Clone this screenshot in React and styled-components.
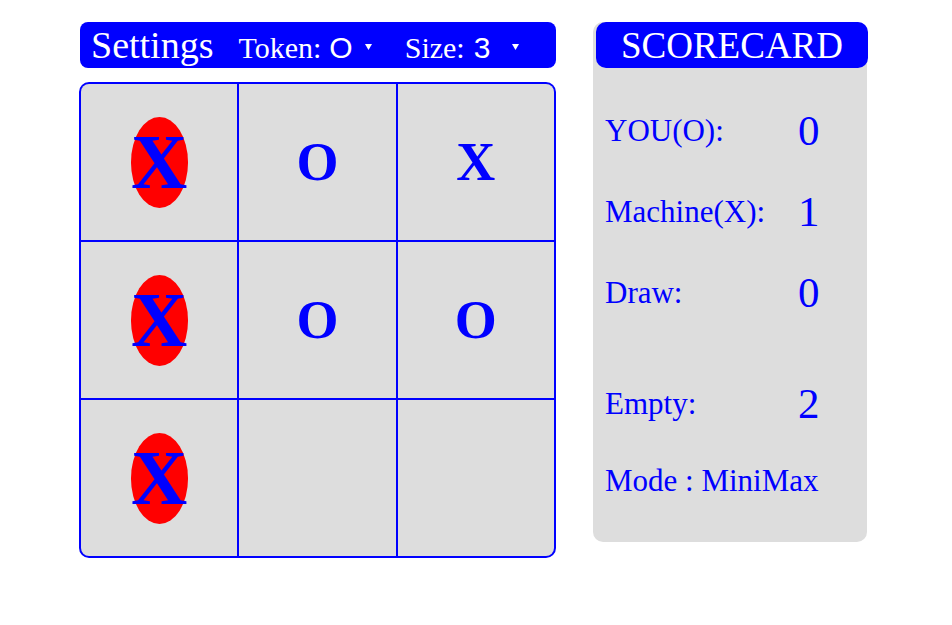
import React from 'react';
import styled, { createGlobalStyle } from 'styled-components';

const GlobalStyle = createGlobalStyle`
    body {
        margin: 0;
        background: #fff;
        font-family: "Liberation Serif", "Times New Roman", serif;
    }
`;

const board = [
    ['X', 'O', 'X'],
    ['X', 'O', 'O'],
    ['X', '', ''],
];
const winning = [[0, 0], [1, 0], [2, 0]];

const scores = [
    { label: 'YOU(O):', value: 0 },
    { label: 'Machine(X):', value: 1 },
    { label: 'Draw:', value: 0 },
];

const Page = styled.div`
    display: flex;
    align-items: flex-start;
    gap: 37px;
    padding: 22px 0 0 79px;
`;

const GameColumn = styled.div`
    width: 477px;
    display: flex;
    flex-direction: column;
`;

const SettingsBar = styled.div`
    margin-left: 1px;
    width: 476px;
    height: 46px;
    box-sizing: border-box;
    padding: 1px 0 0 11px;
    background: #0000ff;
    border-radius: 8px;
    color: #fff;
    display: flex;
    align-items: baseline;
`;

const SettingsTitle = styled.span`
    font-size: 38px;
`;

const SettingLabel = styled.span`
    font-size: 30px;
    margin-left: ${(p) => p.$gap}px;
`;

const SelectValue = styled.span`
    font-family: "Liberation Sans", Arial, sans-serif;
    font-size: 30px;
    margin-left: ${(p) => p.$gap}px;
`;

const Caret = styled.svg`
    align-self: center;
    margin-left: ${(p) => p.$gap}px;
    margin-top: 2px;
`;

const Board = styled.div`
    margin-top: 14px;
    width: 477px;
    height: 476px;
    box-sizing: border-box;
    border: 2px solid #0000ff;
    border-radius: 10px;
    overflow: hidden;
    background: #0000ff;
    display: grid;
    grid-template-columns: repeat(3, 1fr);
    grid-template-rows: repeat(3, 1fr);
    gap: 2px;
`;

const Cell = styled.div`
    background: #dddddd;
    display: flex;
    align-items: center;
    justify-content: center;
    color: #0000ff;
    font-weight: bold;
    font-size: 54px;
`;

const WinMark = styled.span`
    display: inline-flex;
    align-items: center;
    justify-content: center;
    width: 57px;
    height: 91px;
    border-radius: 50%;
    background: #ff0000;
    font-size: 78px;
    line-height: 1;
`;

const ScoreCard = styled.div`
    width: 274px;
    height: 520px;
    box-sizing: border-box;
    background: #dddddd;
    border-radius: 10px;
    display: flex;
    flex-direction: column;
`;

const ScoreHeader = styled.div`
    margin: 0 -1px 0 3px;
    height: 46px;
    background: #0000ff;
    border-radius: 10px;
    color: #fff;
    font-size: 37px;
    display: flex;
    align-items: center;
    justify-content: center;
`;

const ScoreList = styled.div`
    padding: 22px 0 0 12px;
    display: flex;
    flex-direction: column;
    color: #0000ff;
`;

const ScoreRow = styled.div`
    height: ${(p) => p.$height || 81}px;
    display: flex;
    align-items: center;
`;

const ScoreLabel = styled.span`
    width: 193px;
    font-size: 31px;
    white-space: nowrap;
`;

const ScoreValue = styled.span`
    font-size: 43px;
`;

const Spacer = styled.div`
    height: 30px;
`;

const CaretIcon = ({ gap }) => (
    <Caret $gap={gap} width="7" height="7" viewBox="0 0 7 7">
        <polygon points="0,1 7,1 3.5,7" fill="#fff" />
    </Caret>
);

const isWin = (r, c) => winning.some(([wr, wc]) => wr === r && wc === c);

export default function App() {
    return (
        <>
            <GlobalStyle />
            <Page>
                <GameColumn>
                    <SettingsBar>
                        <SettingsTitle>Settings</SettingsTitle>
                        <SettingLabel $gap={25}>Token:</SettingLabel>
                        <SelectValue $gap={8}>O</SelectValue>
                        <CaretIcon gap={12} />
                        <SettingLabel $gap={33}>Size:</SettingLabel>
                        <SelectValue $gap={9}>3</SelectValue>
                        <CaretIcon gap={22} />
                    </SettingsBar>
                    <Board>
                        {board.map((row, r) =>
                            row.map((val, c) => (
                                <Cell key={`cell-${r}-${c}`}>
                                    {isWin(r, c) ? <WinMark>{val}</WinMark> : val}
                                </Cell>
                            ))
                        )}
                    </Board>
                </GameColumn>

                <ScoreCard>
                    <ScoreHeader>SCORECARD</ScoreHeader>
                    <ScoreList>
                        {scores.map((s) => (
                            <ScoreRow key={s.label}>
                                <ScoreLabel>{s.label}</ScoreLabel>
                                <ScoreValue>{s.value}</ScoreValue>
                            </ScoreRow>
                        ))}
                        <Spacer />
                        <ScoreRow>
                            <ScoreLabel>Empty:</ScoreLabel>
                            <ScoreValue>2</ScoreValue>
                        </ScoreRow>
                        <ScoreRow $height={74}>
                            <ScoreLabel>Mode : MiniMax</ScoreLabel>
                        </ScoreRow>
                    </ScoreList>
                </ScoreCard>
            </Page>
        </>
    );
}
